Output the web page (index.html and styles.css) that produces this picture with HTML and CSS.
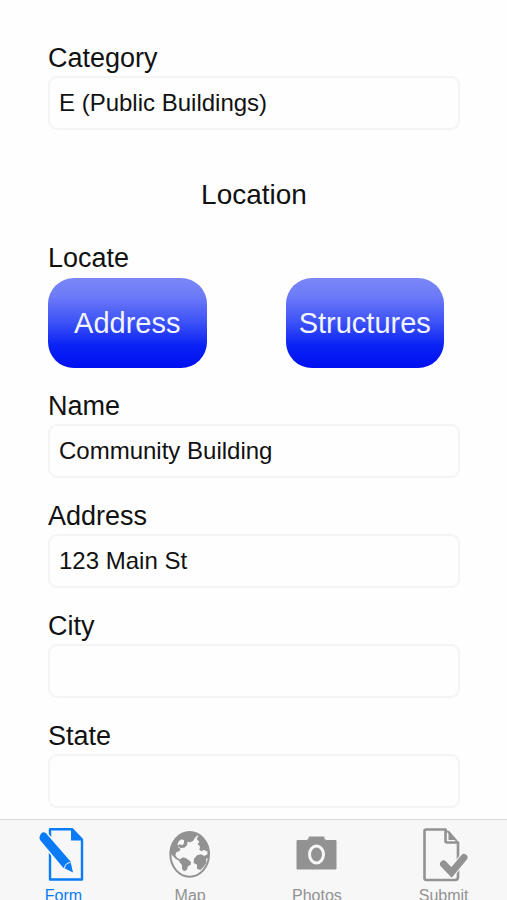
FILE: index.html
```html
<!DOCTYPE html>
<html lang="en">
<head>
<meta charset="utf-8">
<meta name="viewport" content="width=device-width, initial-scale=1">
<title>Form</title>
<link rel="stylesheet" href="styles.css">
</head>
<body>
<main class="form">
  <div class="field">
    <label for="category">Category</label>
    <input id="category" type="text" value="E (Public Buildings)">
  </div>
  <h1 class="section-title">Location</h1>
  <section class="locate" aria-labelledby="locate-label">
    <div class="locate-label" id="locate-label">Locate</div>
    <div class="locate-buttons">
      <button type="button">Address</button>
      <button type="button">Structures</button>
    </div>
  </section>
  <div class="field">
    <label for="name">Name</label>
    <input id="name" type="text" value="Community Building">
  </div>
  <div class="field">
    <label for="address">Address</label>
    <input id="address" type="text" value="123 Main St">
  </div>
  <div class="field">
    <label for="city">City</label>
    <input id="city" type="text">
  </div>
  <div class="field">
    <label for="state">State</label>
    <input id="state" type="text">
  </div>
</main>
<nav class="tabs">
  <a class="tab active" href="#form">
    <svg viewBox="33 824 60 62" aria-hidden="true">
      <path d="M50 829.200H72L82 839.500V879.500H50Z" fill="none" stroke="currentColor" stroke-width="2.400" stroke-linejoin="round"/>
      <path d="M71 828.500V840.500H83Z" fill="currentColor"/>
      <path d="M45.800 833Q42.500 831 40.500 834.500Q38.500 838 40.500 840.500L63 867.500L73 872.500L70.500 861.500Z" fill="currentColor" stroke="#f7f7f7" stroke-width="3" stroke-linejoin="round"/>
      <path d="M45.800 833Q42.500 831 40.500 834.500Q38.500 838 40.500 840.500L63 867.500L73 872.500L70.500 861.500Z" fill="currentColor"/>
      <path d="M64.500 868Q65 863 70.500 862.500" fill="none" stroke="#f7f7f7" stroke-width="1"/>
    </svg>
    <span>Form</span>
  </a>
  <a class="tab" href="#map">
    <svg viewBox="-15 -6 180 186" aria-hidden="true">
      <ellipse cx="74" cy="85" rx="58" ry="67" fill="none" stroke="currentColor" stroke-width="6"/>
      <path d="M14 82L18 58L30 37L48 23L72 17L96 21L99 28L91 34L84 45L76 49L68 47L66 58L58 65L46 66L38 60L44 55L52 58L57 52L57 43L50 40L43 44L38 52L39 63L47 70L42 76L34 79L31 88L37 96L47 101L44 106L32 98L20 86Z" fill="currentColor"/>
      <path d="M46 98L56 94L66 98L78 108L77 116L69 121L65 132L57 136L51 128L51 117L43 108Z" fill="currentColor"/>
      <path d="M103 25L118 38L130 59L134 80L132 95L123 99L124 110L116 122L106 132L96 128L96 116L86 111L87 98L96 88L108 85L118 90L128 84L127 76L116 72L109 76L103 71L105 61L98 55L103 47L95 39Z" fill="currentColor"/>
    </svg>
    <span>Map</span>
  </a>
  <a class="tab" href="#photos">
    <svg viewBox="287 824 60 62" aria-hidden="true">
      <path d="M297 840.500H307L309 838.500V837H324V838.500L326 840.500H336V869H297Z" fill="currentColor" stroke="currentColor" stroke-linejoin="round"/>
      <ellipse cx="316.500" cy="854.500" rx="7" ry="8.500" fill="none" stroke="#f7f7f7" stroke-width="3"/>
    </svg>
    <span>Photos</span>
  </a>
  <a class="tab" href="#submit">
    <svg viewBox="413 824 60 62" aria-hidden="true">
      <path d="M444.500 829.500H425Q423.500 829.500 423.500 831V878Q423.500 880 425.500 880H454Q457 880 457 877V842.500H446Q444.500 842.500 444.500 841Z" fill="none" stroke="currentColor" stroke-width="2.600" stroke-linejoin="round"/>
      <path d="M444.500 829.500L457 842.500" fill="none" stroke="currentColor" stroke-width="1.500"/>
      <path d="M447.500 830L456 840H447.500Z" fill="currentColor"/>
      <path d="M442.500 864L450.500 872.500L463 857.500" fill="none" stroke="#f7f7f7" stroke-width="9" stroke-linecap="round"/>
      <path d="M442.500 864L450.500 872.500L463 857.500" fill="none" stroke="currentColor" stroke-width="7" stroke-linecap="round"/>
    </svg>
    <span>Submit</span>
  </a>
</nav>
</body>
</html>
```
FILE: styles.css
```css
* {
  box-sizing: border-box;
}

body {
  display: flex;
  flex-direction: column;
  height: 100vh;
  margin: 0;
  overflow: hidden;
  background: #fefefe;
  color: #111;
  font-family: "Liberation Sans", Arial, sans-serif;
}

.form {
  flex: 1;
  min-height: 0;
  overflow: hidden;
  padding: 43px 47px 0 48px;
}

.field {
  margin-bottom: 24px;
}

.field label,
.locate-label {
  display: block;
  margin-bottom: 3px;
  font-size: 27px;
  line-height: 30px;
}

.field input {
  display: block;
  width: 100%;
  height: 54px;
  margin-bottom: 23px;
  padding: 0 9px;
  border: 2px solid #f4f4f4;
  border-radius: 9px;
  background: #fefefe;
  color: inherit;
  font: 24px "Liberation Sans", Arial, sans-serif;
}

.field input {
  margin-bottom: 0;
}

.field + .field {
  margin-top: -1px;
}

.section-title {
  margin: 0 0 32px;
  padding-top: 25px;
  font-size: 28px;
  font-weight: 400;
  line-height: 32px;
  text-align: center;
}

.locate {
  margin-bottom: 23px;
}

.locate-label {
  margin-bottom: 5px;
}

.locate-buttons {
  display: grid;
  grid-template-columns: 1fr 1fr;
  gap: 79px;
  margin-right: 16px;
}

.locate-buttons button {
  height: 90px;
  padding: 0;
  border: 0;
  border-radius: 26px;
  background: linear-gradient(#7b86f8, #6d7bf8 20%, #3b50f6 50%, #0a22f5 75%, #0010f0);
  color: #f1f5ff;
  font: 29px "Liberation Sans", Arial, sans-serif;
}

.tabs {
  display: grid;
  grid-template-columns: repeat(4, 1fr);
  flex: none;
  height: 81px;
  overflow: hidden;
  padding-top: 4px;
  border-top: 1px solid #d9d9d9;
  background: #f7f7f7;
}

.tab {
  display: flex;
  flex-direction: column;
  align-items: center;
  color: #929292;
  font-size: 16px;
  line-height: 20px;
  text-decoration: none;
}

.tab.active {
  color: #087bf5;
}

.tab svg {
  flex: none;
  width: 60px;
  height: 62px;
}
```
